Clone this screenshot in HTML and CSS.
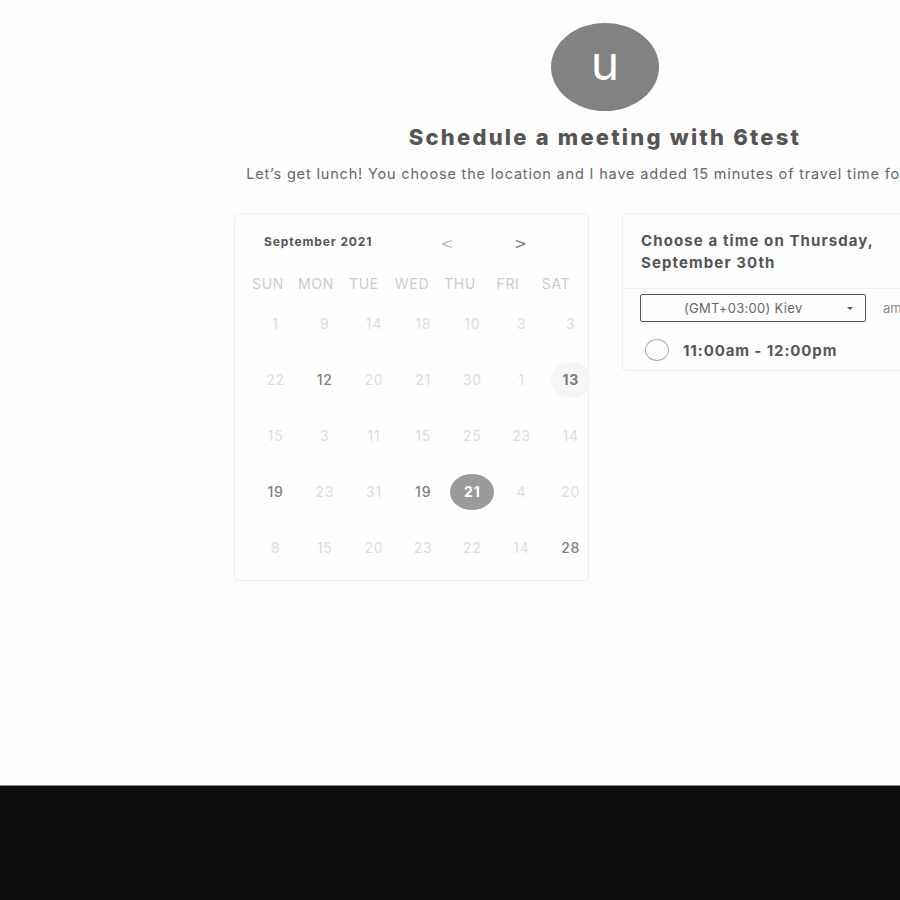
FILE: index.html
```html
<!DOCTYPE html>
<html>
<head>
<meta charset="utf-8">
<link rel="stylesheet" href="styles.css">
</head>
<body>
<div class="page">
  <div class="main">
    <div class="avatar">u</div>
    <h1 class="title">Schedule a meeting with 6test</h1>
    <p class="subtitle">Let’s get lunch! You choose the location and I have added 15 minutes of travel time for you.</p>
    <div class="cards">
      <div class="calendar">
        <div class="cal-head">
          <span class="month">September 2021</span>
          <span class="nav prev">&lt;</span>
          <span class="nav next">&gt;</span>
        </div>
        <div class="dows">
          <span>SUN</span><span>MON</span><span>TUE</span><span>WED</span><span>THU</span><span>FRI</span><span>SAT</span>
        </div>
        <div class="grid">
          <span>1</span><span>9</span><span>14</span><span>18</span><span>10</span><span>3</span><span>3</span>
          <span>22</span><span class="av">12</span><span>20</span><span>21</span><span>30</span><span>1</span><span class="av today">13</span>
          <span>15</span><span>3</span><span>11</span><span>15</span><span>25</span><span>23</span><span>14</span>
          <span class="av">19</span><span>23</span><span>31</span><span class="av">19</span><span class="sel">21</span><span>4</span><span>20</span>
          <span>8</span><span>15</span><span>20</span><span>23</span><span>22</span><span>14</span><span class="av">28</span>
        </div>
      </div>
      <div class="times">
        <div class="times-head">Choose a time on Thursday, September 30th</div>
        <div class="tz-row">
          <div class="tz-select"><span>(GMT+03:00) Kiev</span><span class="caret"></span></div>
          <span class="ampm">am/pm</span>
        </div>
        <div class="slot"><span class="radio"></span><span class="slot-text">11:00am - 12:00pm</span></div>
      </div>
    </div>
  </div>
</div>
<div class="footer"></div>
</body>
</html>
```
FILE: styles.css
```css
html, body { margin: 0; padding: 0; }
body {
  background: #fefefe;
  font-family: "Inter", "Roboto", "Liberation Sans", sans-serif;
  color: #555;
  width: 900px;
  height: 900px;
  overflow: hidden;
}
.page { height: 785px; overflow: hidden; }
.main {
  width: 1210px;
  display: flex;
  flex-direction: column;
  align-items: center;
  padding-top: 23px;
}
.avatar {
  width: 108px;
  height: 88px;
  border-radius: 50%;
  background: #828282;
  color: #fff;
  font-size: 48px;
  line-height: 80px;
  text-align: center;
  font-weight: 400;
}
.title {
  margin: 12px 0 0;
  font-size: 22px;
  font-weight: 800;
  letter-spacing: 2.2px;
  color: #555;
  line-height: 28px;
}
.subtitle {
  margin: 13px 0 0;
  padding-right: 20px;
  font-size: 14.5px;
  color: #666;
  letter-spacing: 0.83px;
  line-height: 20px;
  white-space: nowrap;
}
.cards {
  display: flex;
  gap: 33px;
  margin-top: 29px;
  align-items: flex-start;
}
.calendar {
  width: 355px;
  height: 368px;
  box-sizing: border-box;
  border: 1px solid #f0f0f0;
  border-radius: 4px;
}
.cal-head {
  display: flex;
  align-items: center;
  height: 56px;
  padding-left: 29px;
  padding-top: 4px;
  box-sizing: border-box;
}
.month { font-size: 12px; font-weight: 700; color: #555; width: 206px; padding-bottom: 6px; letter-spacing: 0.9px; }
.nav { font-size: 15px; color: #bbb; width: 86px; font-family: "DejaVu Sans", sans-serif; }
.nav.next { color: #777; }
.dows {
  display: grid;
  grid-template-columns: repeat(7, 48px);
  padding-left: 9px;
  font-size: 14px;
  color: #ccc;
  letter-spacing: 0.7px;
  height: 26px;
  align-items: center;
}
.dows span { text-align: center; }
.grid {
  display: grid;
  grid-template-columns: repeat(7, 49.2px);
  grid-auto-rows: 56px;
  padding-left: 16px;
  font-size: 14px;
  color: #ddd;
  letter-spacing: 0.8px;
  align-items: center;
  justify-items: center;
}
.grid span {
  width: 44px;
  height: 36px;
  line-height: 36px;
  text-align: center;
  border-radius: 50%;
}
.grid .av { color: #808080; font-weight: 500; }
.grid .today { background: #f6f6f6; color: #7a7a7a; font-weight: 700; width: 40px; }
.grid .sel { background: #9a9a9a; color: #fff; font-weight: 700; }
.times {
  width: 354px;
  height: 158px;
  box-sizing: border-box;
  border: 1px solid #eee;
  border-radius: 4px;
}
.times-head {
  padding: 16px 80px 14px 18px;
  font-size: 15px;
  font-weight: 700;
  line-height: 22px;
  color: #555;
  letter-spacing: 1.1px;
  border-bottom: 1px solid #f0f0f0;
  background: #fdfdfd;
}
.tz-row {
  display: flex;
  align-items: center;
  padding: 5px 0 0 17px;
  gap: 17px;
}
.tz-select {
  width: 226px;
  height: 28px;
  box-sizing: border-box;
  border: 1px solid #555;
  border-radius: 2px;
  display: flex;
  align-items: center;
  justify-content: space-between;
  padding: 0 12px 0 43px;
  font-size: 13px;
  color: #666;
  letter-spacing: 0.3px;
}
.caret {
  width: 0; height: 0;
  border-left: 3px solid transparent;
  border-right: 3px solid transparent;
  border-top: 3px solid #555;
}
.ampm { font-size: 13px; color: #888; }
.slot {
  display: flex;
  align-items: center;
  padding: 17px 0 0 22px;
  gap: 14px;
}
.radio {
  width: 24px;
  height: 22px;
  box-sizing: border-box;
  border: 1px solid #aaa;
  border-radius: 50%;
}
.slot-text { font-size: 15px; font-weight: 700; color: #555; letter-spacing: 0.9px; }
.footer {
  height: 114px;
  background: #0e0e0e;
  border-top: 1px solid #888;
}
```
